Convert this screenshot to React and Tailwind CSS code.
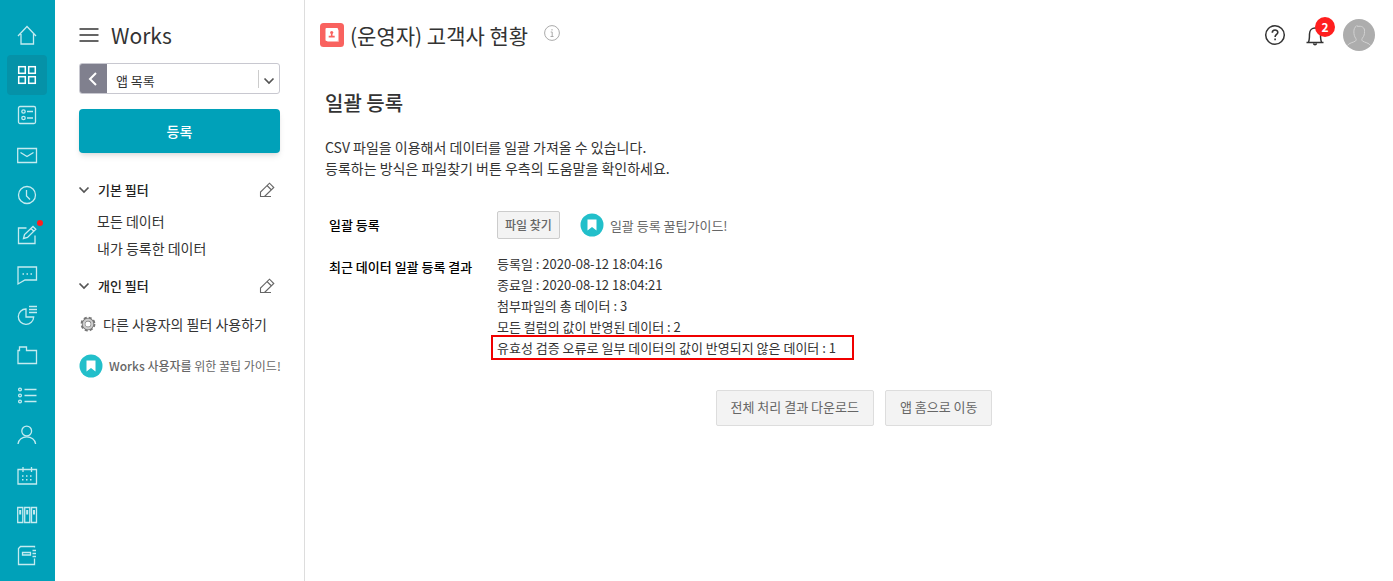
import React from 'react';

const menus = [
  { name: '홈', icon: <path d="M1 11 10 1.500 19 11M4 9v10h12.500V9" /> },
  {
    name: 'Works',
    active: true,
    icon: (
      <g strokeWidth="1.500">
        <rect x="1.700" y="1.700" width="6.600" height="6.600" />
        <rect x="11.700" y="1.700" width="6.600" height="6.600" />
        <rect x="1.700" y="11.700" width="6.600" height="6.600" />
        <rect x="11.700" y="11.700" width="6.600" height="6.600" />
      </g>
    ),
  },
  {
    name: '게시판',
    icon: (
      <g>
        <rect x="1.500" y="1.500" width="17" height="17" rx="1.500" />
        <circle cx="6.500" cy="6.500" r="1.700" />
        <circle cx="6.500" cy="13" r="1.700" />
        <path d="M10 6.500h6M10 13h6" />
      </g>
    ),
  },
  { name: '메일', icon: <path d="M.7 3.500h18.800v14H.7zM3.500 7.500l6.500 4 6.500-4" /> },
  {
    name: '근태',
    icon: (
      <g>
        <circle cx="10" cy="10" r="8.500" />
        <path d="M9.500 5v6l3.500 3.500" />
      </g>
    ),
  },
  {
    name: '전자결재',
    badge: true,
    icon: <path d="M9.500 3h-8v15.500h16.500v-8M6.500 13.500l1-4L16 1.500l2.800 2.800L10.500 12.500zM14 3.500l2.800 2.800" />,
  },
  {
    name: '대화',
    icon: (
      <g>
        <path d="M1 2h18.500v13H8l-7 4z" />
        <path d="M5.500 9H7M9.500 9H11M13.500 9H15" strokeWidth="1.600" />
      </g>
    ),
  },
  {
    name: '보고',
    icon: (
      <g>
        <path d="M9 4a7.700 7.700 0 1 0 7.700 8H9z" />
        <path d="M12 1.500h8M12 4.500h8M12 7.500h8" strokeWidth="1.700" />
      </g>
    ),
  },
  { name: '자료실', icon: <path d="M1 18.500V5.500h1.500V2h7v3.500h10v13z" /> },
  {
    name: '할 일',
    icon: (
      <g>
        <circle cx="3" cy="4.500" r="1.400" />
        <circle cx="3" cy="10.500" r="1.400" />
        <circle cx="3" cy="16.500" r="1.400" />
        <path d="M7.500 4.500h12M7.500 10.500h12M7.500 16.500h12" />
      </g>
    ),
  },
  {
    name: '주소록',
    icon: (
      <g>
        <circle cx="9.700" cy="6" r="4.900" />
        <path d="M1 19c.6-9.500 17-9.500 17.600 0" />
      </g>
    ),
  },
  {
    name: '캘린더',
    icon: (
      <g>
        <path d="M1 4.500h18.500v14.500H1zM6 2v5M14.500 2v5" />
        <path d="M5 11h1.500M9 11h1.500M13 11h1.500M5 14.700h1.500M9 14.700h1.500M13 14.700h1.500" strokeWidth="1.600" />
      </g>
    ),
  },
  {
    name: '문서함',
    icon: (
      <g>
        <path d="M.7 2.500h5.100v15H.7zM7.700 2.500h5.100v15H7.700zM14.500 2.500h5v15h-5z" />
        <path d="M3.200 5v4.500M10.200 5v4.500M17 5v4.500" strokeWidth="2" />
      </g>
    ),
  },
  {
    name: '예약',
    icon: (
      <g>
        <path d="M17.500 2.500V1.500h-14l-2 2v16h16V13.500M5.500 7.500h8v2.500h-8z" />
        <path d="M15.500 5.500H19M15.500 8.500H19M15.500 11.500H19" />
      </g>
    ),
  },
];

const results = [
  '등록일 : 2020-08-12 18:04:16',
  '종료일 : 2020-08-12 18:04:21',
  '첨부파일의 총 데이터 : 3',
  '모든 컬럼의 값이 반영된 데이터 : 2',
];

function ChevronDown() {
  return (
    <svg width="12" height="12" viewBox="0 0 12 12" fill="none" stroke="#555" strokeWidth="1.700">
      <path d="M1.500 3.500 6 8l4.500-4.500" />
    </svg>
  );
}

function PencilIcon() {
  return (
    <svg width="16" height="16" viewBox="0 0 16 16" fill="none" stroke="#666" strokeWidth="1.100">
      <path d="M1.500 14.500V10L10.500 1.200 14.800 5.500 5.500 14.500M8 3.500l4.500 4.500M1 14.500h11" />
    </svg>
  );
}

function GuideIcon() {
  return (
    <svg className="shrink-0" width="24" height="24" viewBox="0 0 24 24">
      <circle cx="12" cy="12" r="11.500" fill="#22bfca" />
      <path d="M7.500 6.500h9v11L12 14l-4.500 3.500z" fill="#fff" />
    </svg>
  );
}

function GearIcon() {
  return (
    <svg width="16" height="16" viewBox="0 0 16 16" fill="none">
      <circle cx="8" cy="8" r="6.200" stroke="#777" strokeWidth="2.400" strokeDasharray="2.900 1.970" />
      <circle cx="8" cy="8" r="4.400" stroke="#777" strokeWidth="3.600" />
      <circle cx="8" cy="8" r="4.300" stroke="#ccc" strokeWidth="2.200" />
    </svg>
  );
}

function FilterHeader({ title }) {
  return (
    <div className="flex h-6 items-center">
      <button className="-ml-px flex items-center gap-2 text-[13px] leading-6 font-medium text-[#222]">
        <ChevronDown />
        {title}
      </button>
      <button className="mr-1 ml-auto p-px" aria-label={title + ' 편집'}>
        <PencilIcon />
      </button>
    </div>
  );
}

function MenuBar() {
  return (
    <nav className="flex w-[55px] shrink-0 flex-col bg-[#00a1b9] pt-[15px] pl-[7px]">
      {menus.map((menu) => (
        <a
          key={menu.name}
          href="#"
          aria-label={menu.name}
          className={
            menu.active
              ? 'relative flex size-10 items-center justify-center rounded bg-[#0592a8] text-white'
              : 'relative flex size-10 items-center justify-center text-[#c4ebf0]'
          }
        >
          <svg width="20" height="20" viewBox="0 0 20 20" fill="none" stroke="currentColor" strokeWidth="1.300" overflow="visible">
            {menu.icon}
          </svg>
          {menu.badge && <span className="absolute top-[5px] right-1 size-[6px] rounded-full bg-[#ff1f1f]"></span>}
        </a>
      ))}
    </nav>
  );
}

function SideBar() {
  return (
    <aside className="w-[250px] shrink-0 border-r border-[#ddd] px-6 pt-[15px]">
      <div className="flex h-10 items-center gap-3">
        <button aria-label="메뉴">
          <svg width="20" height="16" viewBox="0 0 20 16" stroke="#333" strokeWidth="1.300">
            <path d="M.5 2h19M.5 8h19M.5 14h19" />
          </svg>
        </button>
        <h1 className="text-[21px] leading-8 text-[#333]">Works</h1>
      </div>

      <div className="mt-2 flex h-[31px] overflow-hidden rounded-[3px] border border-[#c8c8d0]">
        <button className="-my-px -ml-px flex w-7 shrink-0 items-center justify-center bg-[#80808e]" aria-label="뒤로">
          <svg width="12" height="14" viewBox="0 0 12 14" fill="none" stroke="#fff" strokeWidth="2">
            <path d="M9 1 3 7l6 6" />
          </svg>
        </button>
        <div className="relative grow">
          <select aria-label="앱 목록" className="h-full w-full appearance-none pt-1 pl-[9px] text-[13px] text-[#333] outline-none">
            <option>앱 목록</option>
          </select>
          <span className="pointer-events-none absolute top-[6px] right-1 flex h-[18px] items-center border-l border-[#ccc] pt-1 pl-1">
            <ChevronDown />
          </span>
        </div>
      </div>

      <button className="mt-[15px] h-11 w-full rounded bg-[#00a1b9] text-sm font-medium text-white shadow-md">등록</button>

      <section className="mt-[25px]">
        <FilterHeader title="기본 필터" />
        <ul className="mt-[6px] pl-[18px] text-sm leading-[27px] text-[#333]">
          <li><a href="#">모든 데이터</a></li>
          <li><a href="#">내가 등록한 데이터</a></li>
        </ul>
      </section>
      <section className="mt-3">
        <FilterHeader title="개인 필터" />
      </section>

      <a href="#" className="mt-[14px] flex h-6 items-center gap-[7px] pl-px text-sm text-[#333]">
        <GearIcon />
        다른 사용자의 필터 사용하기
      </a>
      <a href="#" className="mt-[18px] flex h-6 items-center gap-[6px] text-xs whitespace-nowrap text-[#666]">
        <GuideIcon />
        <span><span className="font-medium">Works 사용자를</span> 위한 꿀팁 가이드!</span>
      </a>
    </aside>
  );
}

function Header() {
  return (
    <header className="flex h-10 items-center">
      <svg width="24" height="24" viewBox="0 0 24 24">
        <rect width="24" height="24" rx="3.500" fill="#f9625f" />
        <rect x="7" y="6.500" width="12" height="12.500" rx="1" fill="#fcb1af" />
        <rect x="5.500" y="5" width="12.500" height="13" rx="1" fill="#fff" />
        <circle cx="11.700" cy="9.500" r="1.600" fill="#f9625f" />
        <path d="M8.700 14.500v-1.700h2.200v-2h1.600v2h2.200v1.700z" fill="#f9625f" />
      </svg>
      <h2 className="ml-[6px] text-[21px] leading-8 text-[#333]">(운영자) 고객사 현황</h2>
      <button className="ml-4 -mt-1" aria-label="정보">
        <svg width="16" height="16" viewBox="0 0 16 16" fill="none" stroke="#aaa">
          <circle cx="8" cy="8" r="7.400" />
          <path d="M8 4v1.500M6.700 7h1.500v4.500M6.500 11.500h3" />
        </svg>
      </button>

      <div className="mr-2 ml-auto flex items-center">
        <button aria-label="도움말">
          <svg width="22" height="22" viewBox="0 0 22 22" fill="none" stroke="#333" strokeWidth="1.500">
            <circle cx="11" cy="11" r="9.300" />
            <path d="M8.300 8.800c0-3.700 5.500-3.500 5.500-.4 0 2-2.700 2.200-2.700 4.500M11.100 14.500v1.700" strokeWidth="1.600" />
          </svg>
        </button>
        <button className="relative ml-[18px]" aria-label="알림 2건">
          <svg width="22" height="22" viewBox="0 0 22 22" fill="none" stroke="#333" strokeWidth="1.500">
            <path d="M2.500 18.500h17M4.500 18c1-2 1-4 1-8 0-8 11-8 11 0 0 4 0 6 1 8M9.500 19.500c.5 1.500 2.500 1.500 3 0" />
          </svg>
          <span className="absolute -top-[7px] left-[11px] flex size-5 items-center justify-center rounded-full bg-[#ff1f1f] text-xs font-bold text-white">
            2
          </span>
        </button>
        <button className="ml-[17px]" aria-label="내 프로필">
          <svg width="32" height="32" viewBox="0 0 32 32" fill="none" stroke="#d2d2d2">
            <circle cx="16" cy="16" r="16" fill="#adadad" stroke="none" />
            <path d="M4.500 26.500c1-2.500 6-3 8-4.500 1-1 .8-2 0-3-2-2.500-2.500-10 .5-11.500l1-1 .5 1c4-1 7.500 1 7 5 0 3-.5 4.500-2 6.500-.8 1-1 2 0 3 2 1.500 7 2 8 4.500" />
          </svg>
        </button>
      </div>
    </header>
  );
}

export default function App() {
  return (
    <div className="flex min-h-screen bg-white font-['Noto_Sans_CJK_KR','Noto_Sans',sans-serif]">
      <MenuBar />
      <SideBar />
      <main className="min-w-0 grow pt-[15px] pr-[10px] pl-[15px]">
        <Header />
        <div className="pl-[5px]">
          <h3 className="mt-8 text-xl leading-8 font-medium text-[#333]">일괄 등록</h3>
          <p className="mt-[18px] text-sm leading-[21px] text-[#333]">
            CSV 파일을 이용해서 데이터를 일괄 가져올 수 있습니다.
            <br />
            등록하는 방식은 파일찾기 버튼 우측의 도움말을 확인하세요.
          </p>

          <dl className="mt-8 grid grid-cols-[168px_1fr] gap-y-[14px] pl-1 text-[13px] leading-[21px]">
            <dt className="pt-[3px] font-medium text-black">일괄 등록</dt>
            <dd className="flex items-center">
              <button className="h-7 rounded-xs border border-[#ccc] bg-[#f3f3f3] px-[7px] text-xs font-medium text-[#666]">
                파일 찾기
              </button>
              <a href="#" className="ml-5 flex items-center gap-[6px] text-[#666]">
                <GuideIcon />
                일괄 등록 꿀팁가이드!
              </a>
            </dd>
            <dt className="pt-[3px] font-medium text-black">최근 데이터 일괄 등록 결과</dt>
            <dd className="text-[#333]">
              {results.map((line) => (
                <p key={line}>{line}</p>
              ))}
              <p className="-ml-1 w-fit pr-4 pl-1 outline-2 outline-[#f00000]">
                유효성 검증 오류로 일부 데이터의 값이 반영되지 않은 데이터 : 1
              </p>
            </dd>
          </dl>

          <div className="mt-8 flex justify-center gap-[11px] text-[13px] text-[#666]">
            <button className="h-9 rounded-xs border border-[#ddd] bg-[#f3f3f3] px-[14px] pb-[2px]">전체 처리 결과 다운로드</button>
            <button className="h-9 rounded-xs border border-[#ddd] bg-[#f3f3f3] px-[14px] pb-[2px]">앱 홈으로 이동</button>
          </div>
        </div>
      </main>
    </div>
  );
}
